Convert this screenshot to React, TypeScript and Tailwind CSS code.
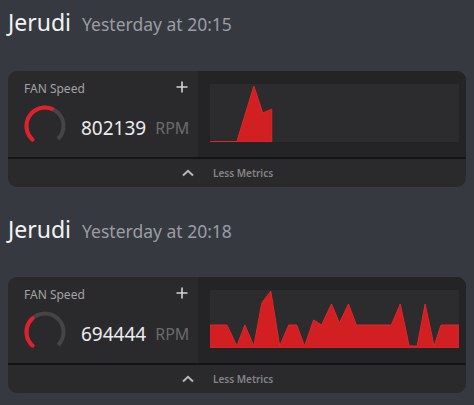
import React from "react";

type Pt = [number, number];

const arc = (cx: number, cy: number, r: number, a0: number, a1: number) => {
	const p = (a: number) => {
		const rad = (a * Math.PI) / 180;
		return [cx + r * Math.sin(rad), cy - r * Math.cos(rad)];
	};
	const [x0, y0] = p(a0);
	const [x1, y1] = p(a1);
	const large = a1 - a0 > 180 ? 1 : 0;
	return `M${x0.toFixed(2)} ${y0.toFixed(2)} A${r} ${r} 0 ${large} 1 ${x1.toFixed(2)} ${y1.toFixed(2)}`;
};

const Gauge = ({ to }: { to: number }) => (
	<svg width="46" height="46" viewBox="0 0 46 46" className="shrink-0">
		<path d={arc(23, 23, 18.5, -135, 135)} fill="none" stroke="#454547" strokeWidth={4} />
		<path d={arc(23, 23, 18.5, -138, to)} fill="none" stroke="#e3202a" strokeWidth={4} strokeLinecap="round" />
	</svg>
);

const Chart = ({ points }: { points: Pt[] }) => {
	const d = points.map((p) => p.join(",")).join(" ");
	return (
		<svg width="100%" height="58" viewBox="0 0 250 58" preserveAspectRatio="none" className="block">
			<polygon points={d} fill="#d11f22" stroke="#e0262a" strokeWidth={1} strokeLinejoin="round" />
		</svg>
	);
};

const chart1: Pt[] = [
	[0, 57.5], [27, 57.5], [44, 2], [53, 29], [62, 25], [62, 58], [0, 58],
];

const chart2: Pt[] = [
	[0, 35], [17, 35], [27, 56], [35, 35], [44, 56], [52, 13], [61, 1], [70, 56], [79, 35], [87, 35],
	[95, 56], [104, 30], [112, 35], [122, 14], [130, 33], [139, 14], [147, 35], [182, 35], [191, 14],
	[200, 56], [208, 56], [216, 14], [225, 56], [232, 35], [250, 35], [250, 58], [0, 58],
];

interface MetricProps {
	time: string;
	value: string;
	gaugeTo: number;
	points: Pt[];
	first?: boolean;
}

const Metric = ({ time, value, gaugeTo, points, first }: MetricProps) => (
	<div className={first ? "pt-[9px]" : "pt-[29px]"}>
		<div className="flex items-baseline h-[26px] leading-[26px]">
			<span className="text-[23px] text-[#f2f3f5]">Jerudi</span>
			<span className="ml-[11px] text-[17.5px] text-[#9a9da3]">{time}</span>
		</div>
		<div className={`${first ? "mt-[36px]" : "mt-[35px]"} rounded-[9px] overflow-hidden bg-[#2a2a2c]`}>
			<div className="flex h-[86px]">
				<div className="w-[190px] shrink-0 pt-[10px] pl-4 pr-[10px]">
					<div className="flex items-center justify-between h-4">
						<span className="text-[12px] text-[#a3a3a5]">FAN Speed</span>
						<svg width="12" height="12" viewBox="0 0 12 12" className="-mt-[4px]">
							<path d="M6 0.5v11M0.5 6h11" stroke="#d4d4d6" strokeWidth={1.6} />
						</svg>
					</div>
					<div className="flex items-center mt-[6px] -ml-[2px] whitespace-nowrap">
						<Gauge to={gaugeTo} />
						<span className="shrink-0 ml-[13px] text-[19px] text-[#ececee] mt-[4px]">{value}</span>
						<span className="shrink-0 ml-[9px] text-[16px] text-[#6a6a6c] mt-[4px]">RPM</span>
					</div>
				</div>
				<div className="flex-1 bg-[#242426] pl-[12px] pr-[7px] pt-[13px]">
					<div className="bg-[#2c2c2e] h-[58px]">
						<Chart points={points} />
					</div>
				</div>
			</div>
			<div className="h-[2px] bg-[#141415]" />
			<div className="h-[28px] flex items-center pl-[174px]">
				<svg width="12" height="8" viewBox="0 0 12 8">
					<path d="M1 6.5L6 1.8L11 6.5" fill="none" stroke="#b8b8ba" strokeWidth={2} />
				</svg>
				<span className="ml-[19px] text-[10px] font-semibold text-[#858587]">Less Metrics</span>
			</div>
		</div>
	</div>
);

export default function App() {
	return (
		<div
			className="min-h-screen w-full bg-[#36393f] px-2"
			style={{ fontFamily: '"Noto Sans", "Open Sans", sans-serif' }}
		>
			<Metric first time="Yesterday at 20:15" value="802139" gaugeTo={22} points={chart1} />
			<Metric time="Yesterday at 20:18" value="694444" gaugeTo={-42} points={chart2} />
		</div>
	);
}
